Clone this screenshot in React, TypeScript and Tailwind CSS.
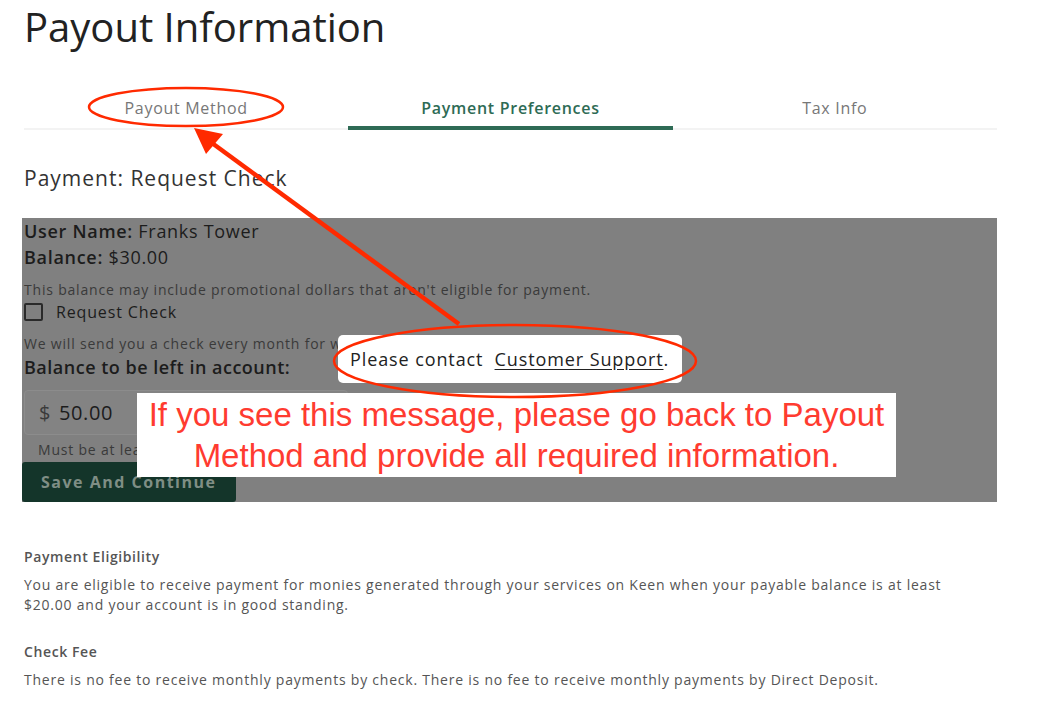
const font = { fontFamily: '"Open Sans", "Liberation Sans", sans-serif' };

const tabs = [
  { name: "Payout Method", active: false },
  { name: "Payment Preferences", active: true },
  { name: "Tax Info", active: false },
];

const Annotations = () => (
  <svg
    className="pointer-events-none absolute left-0 top-0"
    width={1048}
    height={727}
    viewBox="0 0 1048 727"
  >
    <ellipse cx={186} cy={107} rx={97} ry={19} fill="none" stroke="#ff2a00" strokeWidth={2.5} />
    <ellipse cx={515} cy={361} rx={181} ry={36} fill="none" stroke="#ff2a00" strokeWidth={2.5} />
    <line x1={459} y1={324} x2={212} y2={143} stroke="#ff2a00" strokeWidth={4.5} />
    <polygon points="194,128 206,154 223,134" fill="#ff2a00" />
  </svg>
);

export default function App() {
  return (
    <div className="relative h-[727px] w-[1048px] overflow-hidden bg-white text-[#333]" style={font}>
      <div className="ml-[24px] w-[973px]">
        <h1 className="pt-[1px] text-[40px] leading-[52px] font-normal tracking-[0px] text-[#222]">
          Payout Information
        </h1>

        {/* Tabs */}
        <div className="mt-[35px] grid grid-cols-3 border-b-2 border-[#f3f3f3] tracking-[0.7px]">
          {tabs.map((tab) => (
            <div
              key={tab.name}
              className={
                tab.active
                  ? "-mb-[2px] flex h-[42px] items-start justify-center border-b-4 border-[#2e6b55] pt-[8px] text-[16px] font-semibold text-[#2e6b55]"
                  : "flex h-[40px] items-start justify-center pt-[8px] text-[16px] text-[#777]"
              }
            >
              {tab.name}
            </div>
          ))}
        </div>

        <h2 className="mt-[34px] text-[21px] leading-[28px] font-normal tracking-[1px] text-[#333]">
          Payment: Request Check
        </h2>

        {/* Dimmed form behind the dialog */}
        <div className="-ml-[2px] mt-[26px] bg-[#808080] pl-[2px] text-[#1c1c1c]">
          <div className="h-[26px] text-[18px] leading-[26px] tracking-[0.7px]">
            <span className="font-semibold">User Name:</span> Franks Tower
          </div>
          <div className="h-[26px] text-[18px] leading-[26px] tracking-[0.7px]">
            <span className="font-semibold">Balance:</span> $30.00
          </div>
          <div className="mt-[10px] h-[20px] text-[14px] leading-[20px] tracking-[0.8px] text-[#3a3a3a]">
            This balance may include promotional dollars that aren't eligible for payment.
          </div>
          <div className="flex h-[24px] items-center gap-[13px]">
            <div className="h-[18px] w-[19px] rounded-[2px] border-2 border-[#2a2a2a]" />
            <span className="text-[16px] tracking-[0.85px] text-[#1c1c1c]">Request Check</span>
          </div>
          <div className="mt-[10px] h-[20px] text-[14px] leading-[20px] tracking-[0.8px] text-[#3a3a3a]">
            We will send you a check every month for w
          </div>
          <div className="h-[26px] text-[18px] leading-[26px] font-semibold tracking-[0.5px]">
            Balance to be left in account:
          </div>
          <div className="mt-[10px] flex h-[45px] w-[324px] items-center gap-[8px] rounded-[4px] border border-[#8c8c8c] bg-[#838383] pl-[14px] text-[20px] tracking-[0.6px]">
            <span className="text-[#3a3a3a]">$</span>
            <span>50.00</span>
          </div>
          <div className="h-[27px] pl-[14px] pt-[5px] text-[14px] leading-[20px] tracking-[0.8px] text-[#3a3a3a]">
            Must be at lea
          </div>
          <div className="-ml-[2px] flex h-[40px] w-[214px] items-center rounded-[3px] bg-[#14352a] pl-[19px] text-[16px] font-bold tracking-[1.5px] text-[#7f8e85]">
            Save And Continue
          </div>
        </div>

        <div className="mt-[45px] text-[14px] leading-[20px] tracking-[0.77px] text-[#555]">
          <div className="font-semibold tracking-[0.6px]">Payment Eligibility</div>
          <p className="mt-[8px]">
            You are eligible to receive payment for monies generated through your services on Keen when your payable balance is at least
            <br />
            $20.00 and your account is in good standing.
          </p>
          <div className="mt-[27px] font-semibold tracking-[0.6px]">Check Fee</div>
          <p className="mt-[8px]">
            There is no fee to receive monthly payments by check. There is no fee to receive monthly payments by Direct Deposit.
          </p>
        </div>
      </div>

      {/* Dialog */}
      <div className="absolute left-[338px] top-[335px] flex h-[48px] w-[344px] items-center rounded-[5px] bg-white pl-[12px] text-[18px] tracking-[0.9px] text-[#222]">
        Please contact&nbsp;&nbsp;<span className="underline underline-offset-[3px]">Customer Support</span>.
      </div>

      {/* Annotation box */}
      <div
        className="absolute left-[137px] top-[393px] flex h-[84px] w-[759px] items-center justify-center bg-white text-center text-[33px] leading-[41px] text-[#ff3b30]"
        style={{ fontFamily: '"Liberation Sans", Arial, sans-serif' }}
      >
        If you see this message, please go back to Payout
        <br />
        Method and provide all required information.
      </div>

      <Annotations />
    </div>
  );
}
